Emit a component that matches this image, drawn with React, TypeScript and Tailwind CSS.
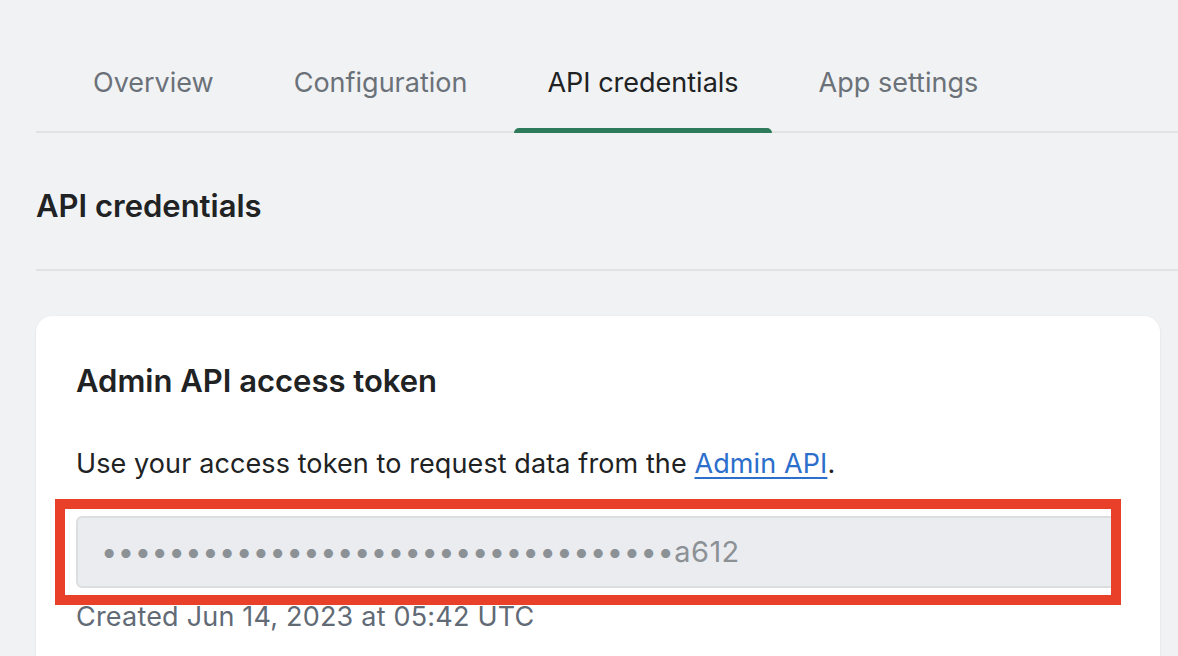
const tabs = ["Overview", "Configuration", "API credentials", "App settings"];

export default function App() {
  const active = "API credentials";
  const masked = "•".repeat(34);

  return (
    <div className="min-h-[656px] w-[1178px] overflow-hidden bg-[#f1f2f4] pl-9 font-['Inter',sans-serif] text-[#202223]">
      {/* Tabs */}
      <div className="flex gap-[14px] border-b-2 border-[#e1e2e4] pl-6">
        {tabs.map((t) => (
          <div
            key={t}
            className={
              "relative px-[33px] pt-[65px] pb-[30px] text-[27px] leading-[36px] " +
              (t === active ? "text-[#202223]" : "text-[#6b7178]")
            }
          >
            {t}
            {t === active && (
              <span className="absolute left-0 right-0 -bottom-[2px] h-[5px] rounded-t-md bg-[#2e7b5c]" />
            )}
          </div>
        ))}
      </div>

      {/* Section heading */}
      <div className="border-b-2 border-[#e1e2e4] pt-[55px] pb-[45px]">
        <h1 className="text-[31px] font-semibold leading-[36px]">API credentials</h1>
      </div>

      {/* Card */}
      <div className="mt-[45px] mr-[18px] rounded-2xl bg-white px-10 pt-[47px] pb-10 shadow-[0_1px_3px_rgba(0,0,0,0.08)]">
        <h2 className="text-[31px] font-semibold leading-[36px]">Admin API access token</h2>
        <p className="mt-[47px] text-[27px] leading-[36px] tracking-[0.1px]">
          Use your access token to request data from the{" "}
          <a href="#" className="text-[#2c6ecb] underline underline-offset-4">
            Admin API
          </a>
          .
        </p>

        <div className="relative mt-[34px]">
          <div className="flex h-[72px] items-center rounded-md border-2 border-[#dcdee1] bg-[#ebecf0] pl-[23px] text-[29px] text-[#8c9196]">
            <span className="tracking-[0.55px]">{masked}</span>
            <span className="tracking-[0.4px]">a612</span>
          </div>
          {/* annotation */}
          <div className="pointer-events-none absolute -left-[21px] -top-[17px] h-[106px] w-[1066px] border-[10px] border-[#e9402a]" />
        </div>

        <p className="mt-[11px] text-[27px] leading-[36px] tracking-[0.2px] text-[#616a75]">
          Created Jun 14, 2023 at 05:42 UTC
        </p>
      </div>
    </div>
  );
}
